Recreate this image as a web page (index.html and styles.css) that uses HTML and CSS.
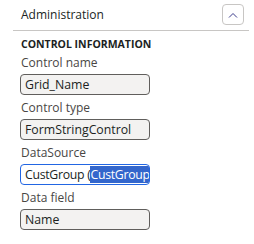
FILE: index.html
```html
<!DOCTYPE html>
<html>
<head>
<meta charset="utf-8">
<link rel="stylesheet" href="styles.css">
</head>
<body>
<div class="panel">
  <div class="header">
    <span class="title">Administration</span>
    <button class="collapse" aria-label="Collapse">
      <svg width="10" height="6" viewBox="0 0 10 6"><path d="M1 5.5 L5 1.5 L9 5.5" fill="none" stroke="#3a3a8a" stroke-width="1"/></svg>
    </button>
  </div>
  <div class="section">
    <div class="section-title">CONTROL INFORMATION</div>
    <div class="field">
      <div class="label">Control name</div>
      <div class="input">Grid_Name</div>
    </div>
    <div class="field">
      <div class="label">Control type</div>
      <div class="input">FormStringControl</div>
    </div>
    <div class="field">
      <div class="label">DataSource</div>
      <div class="input focused">CustGroup (<span class="sel">CustGroup)</span></div>
    </div>
    <div class="field">
      <div class="label">Data field</div>
      <div class="input">Name</div>
    </div>
  </div>
</div>
</body>
</html>
```
FILE: styles.css
```css
html, body { margin: 0; padding: 0; background: #fff; }
body { font-family: "Open Sans", "Noto Sans", sans-serif; color: #323130; }
.panel { width: 254px; }
.header {
  display: flex; align-items: center; justify-content: space-between;
  margin-left: 13px; margin-right: 5px;
  height: 31px; border-bottom: 1px solid #c8c6c4;
  padding-left: 8px; padding-right: 5px; box-sizing: border-box;
}
.title { font-size: 12px; color: #201f1e; margin-top: -1px; }
.collapse {
  width: 22px; height: 21px; padding: 0; margin-top: -1px;
  border: 1px solid #c8c6c4; border-radius: 4px; background: #fff;
  display: flex; align-items: center; justify-content: center;
}
.section { padding-left: 20px; padding-top: 6px; }
.section-title { font-size: 10.5px; font-weight: 700; color: #201f1e; padding-left: 1px; line-height: 14px; margin-bottom: 4px; }
.field { margin-bottom: 5px; }
.label { font-size: 12px; color: #484644; padding-left: 1px; line-height: 16px; margin-bottom: 3px; }
.input {
  width: 130px; height: 21px; box-sizing: border-box;
  border: 1px solid #605e5c; border-radius: 4px; background: #f3f2f1;
  font-size: 12.3px; color: #201f1e; padding: 0 4px; line-height: 19px;
  white-space: nowrap; overflow: hidden;
}
.input.focused { border-color: #2266e3; background: #fff; letter-spacing: -0.3px; }
.sel { background: #3366cc; color: #fff; }
```
